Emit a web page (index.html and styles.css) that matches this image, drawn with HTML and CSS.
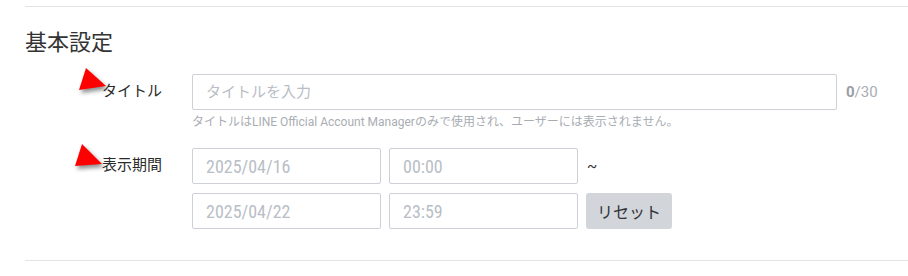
FILE: index.html
```html
<!DOCTYPE html>
<html lang="ja">
<head>
    <meta charset="UTF-8">
    <meta name="viewport" content="width=device-width, initial-scale=1.0">
    <title>基本設定</title>
    <link rel="stylesheet" href="styles.css">
</head>
<body>
    <div class="section">
        <h2 class="section-title">基本設定</h2>
        <div class="form">
            <div class="label">タイトル</div>
            <div class="field-col">
                <div class="title-row">
                    <input class="field title-input" type="text" placeholder="タイトルを入力">
                    <span class="counter"><b>0</b>/30</span>
                </div>
                <p class="help">タイトルはLINE Official Account Managerのみで使用され、ユーザーには表示されません。</p>
            </div>

            <div class="label">表示期間</div>
            <div class="field-col period">
                <div class="period-row">
                    <input class="field date" type="text" value="2025/04/16">
                    <input class="field date" type="text" value="00:00">
                    <span class="tilde">~</span>
                </div>
                <div class="period-row">
                    <input class="field date" type="text" value="2025/04/22">
                    <input class="field date" type="text" value="23:59">
                    <button class="reset">リセット</button>
                </div>
            </div>
        </div>

        <!-- annotation arrows -->
        <svg class="pointer pointer-title" width="40" height="34" viewBox="0 0 40 34">
            <polygon points="11,2 4,24 31,20" />
        </svg>
        <svg class="pointer pointer-period" width="40" height="34" viewBox="0 0 40 34">
            <polygon points="11,2 4,24 31,22" />
        </svg>
    </div>
</body>
</html>
```

FILE: styles.css
```css
body {
    margin: 0;
    background: #fff;
    font-family: Roboto, "Noto Sans CJK JP", sans-serif;
    color: #333;
}
.section {
    position: relative;
    margin: 6px 0 0 25px;
    padding: 0 0 31px;
    border-top: 1px solid #e4e4e4;
    border-bottom: 1px solid #e4e4e4;
}
.section-title {
    margin: 21px 0 16px;
    font-size: 22px;
    font-weight: normal;
    line-height: 30px;
    color: #333;
}
.form {
    display: grid;
    grid-template-columns: 137px 1fr;
    column-gap: 30px;
    row-gap: 19px;
}
.label {
    text-align: right;
    font-size: 15px;
    line-height: 34px;
    color: #2b2b2b;
}
.title-row,
.period-row {
    display: flex;
    align-items: center;
}
.period {
    display: flex;
    flex-direction: column;
    gap: 9px;
}
.period-row {
    gap: 8px;
}
.field {
    box-sizing: border-box;
    height: 36px;
    margin: 0;
    padding: 0 13px;
    border: 1px solid #cdd1d7;
    border-radius: 2px;
    background: #fff;
    font-family: Roboto, "Noto Sans CJK JP", sans-serif;
    font-size: 15px;
    color: #333;
    outline: none;
}
.field::placeholder {
    color: #b9bec6;
}
.title-input {
    width: 645px;
}
.counter {
    margin-left: 9px;
    font-size: 15px;
    color: #a9adb3;
}
.counter b {
    color: #9a9ea4;
}
.help {
    margin: 5px 0 0;
    font-size: 12px;
    line-height: 14px;
    color: #a9adb3;
}
.date {
    width: 189px;
    font-family: "Liberation Sans Narrow", "Roboto Condensed", Roboto, sans-serif;
    font-size: 18px;
    color: #b9bec6;
}
.tilde {
    margin-left: 1px;
    font-size: 15px;
    color: #333;
}
.reset {
    width: 86px;
    height: 36px;
    border: none;
    border-radius: 3px;
    background: #d2d5da;
    font-family: Roboto, "Noto Sans CJK JP", sans-serif;
    font-size: 16px;
    color: #2f3338;
    cursor: pointer;
}
.pointer {
    position: absolute;
    overflow: visible;
}
.pointer polygon {
    fill: #ff0000;
    filter: drop-shadow(2px 3px 2px rgba(0, 0, 0, 0.45));
}
.pointer-title {
    left: 50px;
    top: 59px;
}
.pointer-period {
    left: 46px;
    top: 135px;
}
```
